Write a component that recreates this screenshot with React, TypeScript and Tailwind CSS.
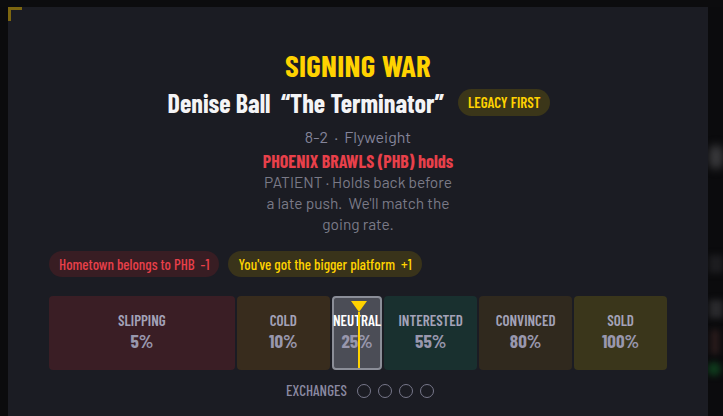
const cond = "font-['Barlow_Condensed','Roboto_Condensed',sans-serif]"
const body = "font-['Barlow','Roboto',sans-serif]"

type Stage = {
  label: string
  pct: string
  grow: string
  bg: string
  current?: boolean
}

const stages: Stage[] = [
  { label: 'SLIPPING', pct: '5%', grow: 'flex-[4]', bg: 'bg-[#3a1e25]' },
  { label: 'COLD', pct: '10%', grow: 'flex-[2]', bg: 'bg-[#382c1d]' },
  { label: 'NEUTRAL', pct: '25%', grow: 'flex-[1]', bg: 'bg-[#4b4d56]', current: true },
  { label: 'INTERESTED', pct: '55%', grow: 'flex-[2]', bg: 'bg-[#19302f]' },
  { label: 'CONVINCED', pct: '80%', grow: 'flex-[2]', bg: 'bg-[#30291e]' },
  { label: 'SOLD', pct: '100%', grow: 'flex-[2]', bg: 'bg-[#3a361b]' },
]

function StageBox({ s }: { s: Stage }) {
  return (
    <div
      className={`${s.grow} ${s.bg} relative min-w-0 rounded-[4px] flex flex-col items-center justify-center pb-[3px] ${
        s.current ? 'border-2 border-[#8b8e98]' : ''
      }`}
    >
      <span
        className={`${cond} text-[15px] font-semibold leading-none whitespace-nowrap ${
          s.current ? 'text-white' : 'text-[#a3a2b8]'
        }`}
      >
        {s.label}
      </span>
      <span className={`${cond} mt-[3px] text-[19px] font-bold leading-none text-[#9897ad]`}>{s.pct}</span>
      {s.current && (
        <div className="absolute inset-x-0 top-[3px] bottom-0 flex flex-col items-center pl-[3px]">
          <svg width="16" height="11" viewBox="0 0 16 11" className="shrink-0">
            <polygon points="0,0 16,0 8,11" fill="#ffd200" />
          </svg>
          <div className="w-[2px] flex-1 bg-[#ffd200]" />
        </div>
      )}
    </div>
  )
}

export default function App() {
  return (
    <div className="relative h-[416px] w-[723px] overflow-hidden bg-[#0b0b0d]">
      {/* blurred page behind the modal */}
      <div className="absolute right-0 top-[145px] h-[24px] w-[14px] rounded-full bg-[#3a3a3d] blur-[4px]" />
      <div className="absolute right-0 top-[255px] h-[18px] w-[14px] bg-[#1d1d20] blur-[3px]" />
      <div className="absolute right-0 top-[300px] h-[18px] w-[14px] bg-[#2a2a2d] blur-[3px]" />
      <div className="absolute right-[4px] top-[330px] h-[24px] w-[8px] bg-[#2b1c1c] blur-[3px]" />
      <div className="absolute right-[2px] top-[362px] h-[14px] w-[14px] rounded-full bg-[#0f3a1c] blur-[3px]" />

      <div className="absolute left-0 top-0 h-[7px] w-full bg-[#0c0c0e]" />

      <div className="relative ml-[8px] mt-[7px] h-[420px] w-[700px] bg-[#1b1c23] px-[41px] pt-[42px]">
        <div className="absolute left-0 top-0 h-[14px] w-[14px] border-l-[3px] border-t-[3px] border-[#7d6610]" />

        <div className="flex flex-col items-center">
          <h1 className={`${cond} text-[31px] font-bold leading-none tracking-[0.2px] text-[#ffd200]`}>
            SIGNING WAR
          </h1>

          <div className="mt-[9px] flex items-center gap-[14px] pl-[2px]">
            <span className={`${cond} whitespace-pre text-[26px] font-bold leading-none text-[#f4f4f6]`}>
              Denise Ball  “The Terminator”
            </span>
            <span
              className={`${cond} rounded-full bg-[#3b3619] px-[10px] py-[5px] text-[15px] font-semibold leading-[17px] text-[#ffd200]`}
            >
              LEGACY FIRST
            </span>
          </div>

          <div className={`${body} mt-[11px] whitespace-pre text-[16px] leading-[20px] text-[#84849a]`}>
            8-2  ·  Flyweight
          </div>

          <div className={`${cond} mt-[4px] text-[18px] font-bold leading-[20px] text-[#e8404a]`}>
            PHOENIX BRAWLS (PHB) holds
          </div>

          <p className={`${body} text-center text-[15.5px] leading-[21px] text-[#7a7a87]`}>
            PATIENT · Holds back before
            <br />
            a late push.&nbsp; We'll match the
            <br />
            going rate.
          </p>
        </div>

        <div className="mt-[17px] flex gap-[9px]">
          <span
            className={`${cond} rounded-full bg-[#381d23] px-[10px] py-[5px] text-[15px] font-medium leading-[16px] text-[#e8404a]`}
          >
            Hometown belongs to PHB&nbsp; -1
          </span>
          <span
            className={`${cond} rounded-full bg-[#39331a] px-[10px] py-[5px] text-[15px] font-medium leading-[16px] text-[#ffd200]`}
          >
            You've got the bigger platform&nbsp; +1
          </span>
        </div>

        <div className="mt-[19px] flex h-[74px] gap-[2px]">
          {stages.map((s) => (
            <StageBox key={s.label} s={s} />
          ))}
        </div>

        <div className="mt-[13px] flex items-center justify-center gap-[7px] pl-[4px]">
          <span className={`${cond} mr-[3px] text-[15px] font-medium leading-none text-[#8b8aa2]`}>EXCHANGES</span>
          {[0, 1, 2, 3].map((i) => (
            <span key={i} className="h-[14px] w-[14px] rounded-full border-[1.5px] border-[#77778a]" />
          ))}
        </div>
      </div>
    </div>
  )
}
